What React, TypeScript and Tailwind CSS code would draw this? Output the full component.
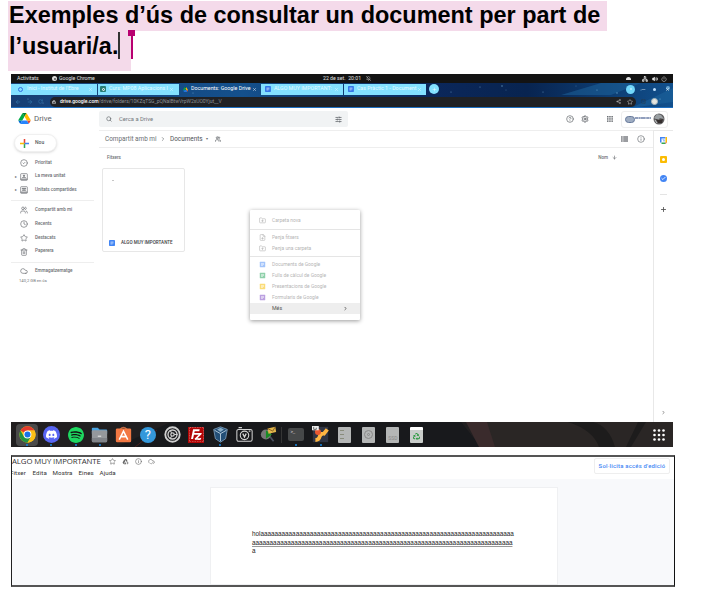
import React from "react";
import {
  Search, CircleHelp, Settings, ChevronRight, ArrowDown, ArrowLeft, ArrowRight, RotateCw, Lock,
  Share2, Star, Info, CircleCheck, Users, Clock, Trash2, Cloud, CloudCheck, FolderPlus, FilePlus, FolderUp,
  Plus, X, Network, Volume2, Power, BellOff, SlidersHorizontal, Minus, Check, PanelRight,
} from "lucide-react";
import { SiDiscord, SiSpotify, SiFilezilla } from "react-icons/si";
import { FaRecycle } from "react-icons/fa";
import { MdOutlineAddToDrive } from "react-icons/md";

const roboto = "font-['Roboto',sans-serif]";

function DriveLogo({ className }: { className: string }) {
  return (
    <svg viewBox="0 0 87 78" className={className}>
      <path d="M6.6 66.9l3.9 6.6c.8 1.4 2 2.5 3.3 3.3L27.5 53H0c0 1.6.4 3.1 1.2 4.5z" fill="#0066da" />
      <path d="M43.7 25L29.9 1.2c-1.3.8-2.5 1.9-3.3 3.3L1.2 48.5A9 9 0 000 53h27.5z" fill="#00ac47" />
      <path d="M73.6 76.8c1.3-.8 2.5-1.9 3.3-3.3L86.1 57.5c.8-1.4 1.2-2.9 1.2-4.5H59.8l5.9 11.5z" fill="#ea4335" />
      <path d="M43.7 25L57.4 1.2C56.1.4 54.5 0 52.9 0H34.4c-1.6 0-3.1.4-4.5 1.2z" fill="#00832d" />
      <path d="M59.8 53H27.5L13.8 76.8c1.3.8 2.9 1.2 4.5 1.2h50.8c1.6 0 3.1-.4 4.5-1.2z" fill="#2684fc" />
      <path d="M73.4 26.5L60.7 4.5c-.8-1.4-2-2.5-3.3-3.3L43.7 25l16.1 28h27.5c0-1.6-.4-3.1-1.2-4.5z" fill="#ffba00" />
    </svg>
  );
}

function DocIcon({ className }: { className: string }) {
  return (
    <svg viewBox="0 0 12 12" className={className} fill="none">
      <rect width="12" height="12" rx="1.5" fill="currentColor" />
      <path d="M3 4h6M3 6h6M3 8h4" stroke="white" strokeWidth="1" />
    </svg>
  );
}

function PersonBox({ wide = false }: { wide?: boolean }) {
  return (
    <svg viewBox="0 0 24 24" fill="none" stroke="currentColor" strokeWidth="2">
      <rect x="2" y="2" width="20" height="20" rx="2" /><path d="M2 18.500h20" strokeWidth="3" />
      <circle cx={wide ? 9 : 12} cy="8" r="2" fill="currentColor" /><path d="M7 14q5-4 10 0" strokeWidth="3" />
      {wide && <circle cx="15" cy="8" r="2" fill="currentColor" />}
    </svg>
  );
}

function Wallpaper() {
  return (
    <svg className="absolute inset-0 h-full w-full" viewBox="0 0 662 25" preserveAspectRatio="none">
      <defs>
        <linearGradient id="sky">
          <stop offset="0" stopColor="#173f74" />
          <stop offset=".35" stopColor="#14508c" />
          <stop offset=".63" stopColor="#0b275b" />
          <stop offset=".78" stopColor="#082450" />
          <stop offset="1" stopColor="#11508d" />
        </linearGradient>
      </defs>
      <rect width="662" height="25" fill="url(#sky)" />
      <path d="M0 24.5H662" stroke="#1e6fc0" strokeWidth="1" />
      <path d="M550 12l40-12h40l-30 12M620 25l42-20v14z" fill="#1e659d" opacity=".5" />
      <g fill="#8cc9ef" opacity=".7">
        <circle cx="469" cy="4" r=".5" /><circle cx="491" cy="3" r=".7" /><circle cx="495" cy="7" r=".4" />
        <circle cx="532" cy="9" r=".5" /><circle cx="565" cy="3" r=".4" /><circle cx="586" cy="7" r=".6" />
        <circle cx="606" cy="10" r=".7" /><circle cx="630" cy="7" r=".6" /><circle cx="657" cy="5" r="2" />
        <circle cx="17" cy="16" r=".5" /><circle cx="32" cy="20" r=".5" /><circle cx="182" cy="10" r=".5" />
        <circle cx="649" cy="16" r=".6" /><circle cx="440" cy="9" r=".5" />
      </g>
    </svg>
  );
}

function SystemBar() {
  return (
    <div className="flex h-[9px] items-center bg-[#131313] text-[5.2px] leading-none text-[#e2e2e2]">
      <span className="w-[41px] pl-[6px]">Activitats</span>
      <span className="mr-[2px] flex size-[5px] items-center justify-center rounded-full bg-[#ddd]"><i className="size-[2px] rounded-full bg-[#555]" /></span>
      <span className="w-[264px]">Google Chrome</span>
      <span className="w-[43px]">22 de set.&nbsp; 20:01</span>
      <BellOff className="size-[5px]" />
      <span className="flex-1" />
      <span className="mr-[11px] h-[3px] w-[5px] rounded-t-sm bg-[#ddd]" />
      <Network className="mr-[4px] size-[6px]" strokeWidth={3} />
      <Volume2 className="mr-[3px] size-[6px] fill-current" />
      <Power className="mr-[6px] size-[6px]" />
    </div>
  );
}

const tabClose = "mr-[4px] size-[5px] shrink-0";

function Tabs() {
  return (
    <div className="relative flex h-[12px] items-center text-[5.3px] leading-none">
      <div className="flex h-[11px] w-[86px] items-center bg-[#83e1ff] pl-[7px] text-[#e2f9ff]">
        <i className="mr-[4px] size-[5px] rounded-full border border-[#346ee2]" />
        <span className="flex-1 whitespace-nowrap">Inici - Institut de l'Ebre</span><X className={tabClose} />
      </div>
      <div className="ml-px flex h-[11px] w-[81px] items-center bg-[#83e1ff] pl-[2px] text-[#e2f9ff]">
        <i className="mr-[3px] flex size-[6px] items-center justify-center rounded-[1px] bg-[#277e76]"><i className="size-[3px] rounded-full border border-white" /></i>
        <span className="w-[60px] whitespace-nowrap">Curs: MP08 Aplicacions l</span><X className={tabClose} />
      </div>
      <div className="flex h-[11px] w-[82px] items-center pl-[4px] text-white">
        <DriveLogo className="mr-[3px] size-[5px]" />
        <span className="flex-1 whitespace-nowrap">Documents: Google Drive</span><X className={tabClose} />
      </div>
      <div className="flex h-[11px] w-[82px] items-center bg-[#83e1ff] pl-[4px] text-[#e2f9ff]">
        <DocIcon className="mr-[3px] size-[6px] text-[#3477e8]" />
        <span className="w-[61px] whitespace-nowrap">ALGO MUY IMPORTANT:</span><X className={tabClose} />
      </div>
      <div className="ml-px flex h-[11px] w-[82px] items-center bg-[#83e1ff] pl-[4px] text-[#e2f9ff]">
        <DocIcon className="mr-[3px] size-[6px] text-[#3477e8]" />
        <span className="w-[61px] whitespace-nowrap">Cas Pràctic 1 - Document</span><X className={tabClose} />
      </div>
      <span className="ml-[3px] flex size-[10px] items-center justify-center rounded-full bg-[#83e1ff]"><Plus className="size-[5px] text-white" /></span>
      <span className="flex-1" />
      <span className="mr-[6px] flex size-[9px] items-center justify-center rounded-full bg-[#72d7fa]"><i className="size-[2px] bg-[#a9eaff]" /></span>
      <Minus className="mr-[7px] size-[5px] text-white" />
      <i className="mr-[9px] size-[3px] rounded-sm bg-[#bfe1ff]" />
      <X className="mr-[3px] size-[5px] text-white" />
    </div>
  );
}

function AddressBar() {
  return (
    <div className="relative flex h-[13px] items-center text-[#3981b6]">
      <ArrowLeft className="ml-[4px] size-[6px]" />
      <ArrowRight className="ml-[6px] size-[6px]" />
      <RotateCw className="ml-[5px] size-[5px]" />
      <div className="ml-[7px] flex h-[10px] w-[586px] items-center rounded-full bg-[#202124] pl-[2px] text-[5px] leading-none text-[#8d9094]">
        <Lock className="mr-[4px] size-[4px] text-white" strokeWidth={3} />
        <span className="whitespace-nowrap tracking-[-0.02px]"><b className="font-medium text-white">drive.google.com</b>/drive/folders/10KZqTSG_pQNaIBtwVrpW2xUO0Yjut__V</span>
        <span className="flex-1" />
        <Share2 className="mr-[6px] size-[5px] text-[#ccc]" /><Star className="mr-[3px] size-[6px] text-[#ccc]" />
      </div>
      <PanelRight className="ml-[5px] size-[5px] text-[#2b4050]" />
      <span className="ml-[5px] size-[7px] rounded-full border border-[#a5b5bd] bg-[#e4e5df]" />
    </div>
  );
}

function DriveHeader() {
  return (
    <div className="flex h-[22px] items-center text-[#5f6368]">
      <div className="flex w-[88px] items-center pl-[7px]">
        <DriveLogo className="h-[11px] w-[13px]" />
        <span className="ml-[3px] text-[7.9px]">Drive</span>
      </div>
      <div className="flex h-[16px] w-[249px] items-center rounded-[2px] bg-[#f1f3f4] pl-[7px]">
        <Search className="size-[6px]" strokeWidth={2.5} />
        <span className="ml-[7px] flex-1 text-[5.8px] text-[#74787c]">Cerca a Drive</span>
        <SlidersHorizontal className="mr-[6px] size-[7px]" strokeWidth={2.6} />
      </div>
      <CircleHelp className="ml-[218px] size-[8px]" />
      <Settings className="ml-[7px] size-[8px]" strokeWidth={2.6} />
      <svg viewBox="0 0 6 6" className="ml-[18px] size-[6px]" fill="#6b6f74">
        {[0, 2.2, 4.4].map((y) => [0, 2.2, 4.4].map((x) => <rect key={`${x}-${y}`} x={x} y={y} width="1.5" height="1.5" />))}
      </svg>
      <div className="ml-[8px] flex h-[17px] w-[47px] items-center rounded-[3px] border border-[#eee] pl-[3px]">
        <span className="h-[7px] w-[10px] shrink-0 rounded-full border border-[#66799b] bg-[#9fadc2]" />
        <svg viewBox="0 0 16 4" className="-mt-[3px] h-[4px] w-[16px] shrink-0">
          <path d="M0 2h16" stroke="#6c7fa6" strokeWidth="1.3" strokeDasharray="3 .4 2 .3 5 .5" />
        </svg>
        <svg viewBox="0 0 12 12" className="ml-[2px] size-[12px] shrink-0">
          <circle cx="6" cy="6" r="5.5" fill="#605f61" />
          <path d="M1 5l3-4 4 1 3 4-4-1-2 2z" fill="#9aa0a3" /><path d="M3 6l3 1 4-1-1 4H5z" fill="#342e2d" /><path d="M2 7l2 3" stroke="#c3c7c7" />
        </svg>
      </div>
    </div>
  );
}

function NavItem({ icon, label, arrow = false }: { icon: React.ReactNode; label: string; arrow?: boolean }) {
  return (
    <div className="flex h-[13.8px] items-center text-[4.6px] font-medium leading-none text-[#6b6e72]">
      <span className="w-[9px] pl-[4px] text-[4px]">{arrow ? "▸" : ""}</span>
      <span className="w-[15px] [&>svg]:size-[8px]">{icon}</span>
      <span className="whitespace-nowrap">{label}</span>
    </div>
  );
}

function Sidebar() {
  return (
    <aside className="w-[88px] shrink-0 pt-[4px]">
      <div className="ml-[3px] flex h-[18px] w-[43px] items-center rounded-full border border-[#f0f0f0] bg-white pl-[5px] shadow-sm">
        <svg viewBox="0 0 10 10" className="size-[9px]" strokeWidth="1.7">
          <path d="M5 0v5" stroke="#ea4335" /><path d="M5 5v5" stroke="#34a853" /><path d="M0 5h5" stroke="#fbbc04" /><path d="M5 5h5" stroke="#4285f4" />
        </svg>
        <span className="ml-[6px] text-[5px] font-medium text-[#55585c]">Nou</span>
      </div>
      <div className="mt-[4px]">
        <NavItem icon={<CircleCheck />} label="Prioritat" />
        <NavItem icon={<PersonBox />} label="La meva unitat" arrow />
        <NavItem icon={<PersonBox wide />} label="Unitats compartides" arrow />
      </div>
      <div className="my-[3px] mr-[5px] border-t border-[#eee] pt-[2px]">
        <NavItem icon={<Users />} label="Compartit amb mi" />
        <NavItem icon={<Clock />} label="Recents" />
        <NavItem icon={<Star />} label="Destacats" />
        <NavItem icon={<Trash2 />} label="Paperera" />
      </div>
      <div className="mr-[5px] border-t border-[#eee] pt-[2px]">
        <NavItem icon={<Cloud />} label="Emmagatzematge" />
        <p className="pl-[8px] text-[4.2px] leading-[6px] text-[#74777a]">140,2 GB en ús</p>
      </div>
    </aside>
  );
}

function MenuRow({ icon, label, color = "text-[#aaa]" }: { icon: React.ReactNode; label: string; color?: string }) {
  return (
    <div className="flex h-[11px] items-center text-[4.9px] leading-none text-[#b5b5b5]">
      <span className={"ml-[9px] flex w-[13px] [&>svg]:size-[7px] " + color}>{icon}</span>{label}
    </div>
  );
}

function ContextMenu() {
  return (
    <div className="absolute left-[151px] top-[79px] h-[110px] w-[110px] rounded-[1px] bg-white pt-[5px] shadow-[0_1px_4px_rgba(0,0,0,0.4)]">
      <MenuRow icon={<FolderPlus strokeWidth={1.8} />} label="Carpeta nova" />
      <div className="mt-[3px] border-t border-[#e5e5e5] pt-[2px]">
        <MenuRow icon={<FilePlus strokeWidth={1.8} />} label="Penja fitxers" />
        <MenuRow icon={<FolderUp strokeWidth={1.8} />} label="Penja una carpeta" />
      </div>
      <div className="mt-[2px] border-t border-[#e5e5e5] pt-[2px]">
        <MenuRow icon={<DocIcon className="scale-[0.85]" />} label="Documents de Google" color="text-[#a3c4fa]" />
        <MenuRow icon={<DocIcon className="scale-[0.85]" />} label="Fulls de càlcul de Google" color="text-[#8fd0aa]" />
        <MenuRow icon={<DocIcon className="scale-[0.85]" />} label="Presentacions de Google" color="text-[#fbdc78]" />
        <MenuRow icon={<DocIcon className="scale-[0.85]" />} label="Formularis de Google" color="text-[#bba0e0]" />
        <div className="flex h-[11px] items-center bg-[#eee] pl-[22px] text-[5.3px] leading-none text-[#555]">
          <span className="flex-1">Més</span><ChevronRight className="mr-[12px] size-[5px]" strokeWidth={4} />
        </div>
      </div>
    </div>
  );
}

function Files() {
  return (
    <main className="relative flex-1 border-t border-[#eee]">
      <div className="flex h-[17px] items-center border-b border-[#eee] pl-[6px] text-[6.4px] leading-none text-[#6a6e72]">
        <span className="w-[51px] whitespace-nowrap">Compartit amb mi</span>
        <ChevronRight className="ml-[4px] mr-[4px] size-[6px]" strokeWidth={2.5} />
        <span className="w-[33px] text-[#505357]">Documents</span>
        <span className="ml-[3px] text-[4px]">▾</span>
        <Users className="ml-[7px] size-[6px]" strokeWidth={3} />
        <span className="flex-1" />
        <svg viewBox="0 0 7 6" className="mr-[9px] h-[6px] w-[7px]" fill="#7b7e82">
          {[0.3, 2.3, 4.3].map((y) => <path key={y} d={`M0 ${y}h1.700v1.500H0zM2.200 ${y}h4.800v1.500H2.200z`} />)}
        </svg>
        <Info className="mr-[8px] size-[8px]" />
      </div>
      <div className="flex h-[20px] items-center justify-between pl-[8px] pr-[36px] text-[4.6px] font-medium text-[#6c6f73]">
        <span>Fitxers</span><span className="flex items-center gap-[4px]">Nom <ArrowDown className="size-[5px]" strokeWidth={3} /></span>
      </div>
      <div className="ml-[3px] flex h-[84px] w-[83px] flex-col rounded-[2px] border border-[#e7e7e7]">
        <i className="ml-[9px] mt-[11px] h-px w-[2px] bg-[#c6c6c6]" />
        <div className="mt-auto flex h-[17px] items-center whitespace-nowrap pl-[6px] text-[4.55px] font-medium text-[#3c4043]">
          <DocIcon className="mr-[6px] size-[6px] text-[#4285f4]" /><span className="pt-[1px]">ALGO MUY IMPORTANTE</span>
        </div>
      </div>
      <ContextMenu />
    </main>
  );
}

function SideRail() {
  return (
    <aside className="flex w-[20px] shrink-0 flex-col items-center border-l border-t border-[#e8e8e8] text-[#555]">
      <svg viewBox="0 0 14 14" className="mt-[6px] size-[7px]">
        <path fill="#fff" d="M3 3h8v8H3z" /><path d="M0 0h11v3H3v8H0z" fill="#4285f4" /><path d="M11 0h3v11h-3z" fill="#fbbc04" /><path d="M3 11h8v3H3z" fill="#34a853" /><path d="M11 11h3l-3 3z" fill="#ea4335" /><path d="M5 5h2v4M9 5v4" fill="none" stroke="#4285f4" />
      </svg>
      <span className="mt-[12px] flex size-[7px] items-center justify-center rounded-[1px] bg-[#fbbc04]"><i className="size-[3px] rounded-full bg-white" /></span>
      <span className="mt-[12px] flex size-[7px] items-center justify-center rounded-full bg-[#4285f4]"><Check className="size-[5px] text-white" strokeWidth={4} /></span>
      <i className="mt-[12px] w-[7px] border-t border-[#e4e4e4]" />
      <Plus className="mt-[11px] size-[7px]" strokeWidth={3} />
      <ChevronRight className="mb-[7px] mt-auto size-[5px]" strokeWidth={3} />
    </aside>
  );
}

function DockItem({ children, running = false, active = false }: { children: React.ReactNode; running?: boolean; active?: boolean }) {
  return (
    <div className="relative flex h-[25px] w-[24.1px] shrink-0 items-center justify-center">
      <div className={"flex size-[22px] items-center justify-center rounded-[4px] [&>svg]:size-[17px] " + (active ? "bg-[#4a4a4a]" : "")}>{children}</div>
      {running && <i className="absolute bottom-[1px] left-[11px] size-[2px] rounded-full bg-[#1688e4]" />}
    </div>
  );
}

function Dock() {
  return (
    <div className="relative flex h-[25px] items-center bg-[#211f20] pl-[4.4px]">
      <svg viewBox="0 0 662 25" className="absolute inset-0 h-full w-full">
        <path d="M160 0h290l20 25H105z" fill="#18191c" /><path d="M455 0h24l6 25h-17z" fill="#3a2b2c" /><path d="M476 0h186v25H484z" fill="#2a2625" />
        <path d="M557 0q25 8 31 25h16Q598 4 582 0zM627 0l-12 25h5l15-25z" fill="#1d1c1c" /><path d="M124 25l22-17" stroke="#49201f" />
      </svg>
      <DockItem active running>
        <svg viewBox="0 0 48 48">
          <circle cx="24" cy="24" r="23" fill="#fbc116" />
          <path d="M24 24L4.1 12.5A23 23 0 0143.9 12.5H24z" fill="#e33b2e" /><path d="M4.1 12.5A23 23 0 0024 47l10-17-20 0z" fill="#229342" /><path d="M24 13h20A23 23 0 0124 47l10-17z" fill="#fbc116" />
          <circle cx="24" cy="24" r="11" fill="white" /><circle cx="24" cy="24" r="8.5" fill="#1a73e8" />
        </svg>
      </DockItem>
      <DockItem running><span className="flex size-[17px] items-center justify-center rounded-full bg-[#5865f2]"><SiDiscord className="size-[11px] text-white" /></span></DockItem>
      <DockItem running><span className="flex size-[16px] rounded-full bg-[#111]"><SiSpotify className="size-[16px] text-[#1ed760]" /></span></DockItem>
      <DockItem running>
        <svg viewBox="0 0 20 20"><path d="M1 3a1 1 0 011-1h6l2 2h8a1 1 0 011 1v4H1z" fill="#4aa3e0" /><rect x="1" y="5" width="18" height="14" rx="1.5" fill="#95989c" /><path d="M1 14h18v3.500a1.500 1.500 0 01-1.500 1.500h-15A1.500 1.500 0 011 17.500z" fill="#808388" /><path d="M8 12h4" stroke="#e9e9e9" strokeWidth="1.300" /></svg>
      </DockItem>
      <DockItem>
        <svg viewBox="0 0 20 20" fill="none"><path d="M6 4q4-5 8 0" stroke="#bd6b47" strokeWidth="1.5" /><rect x="1" y="3" width="18" height="16" rx="1.5" fill="#f27843" /><path d="M5 16l5-10 5 10M6 12.500h8" stroke="white" strokeWidth="1.8" /></svg>
      </DockItem>
      <DockItem><span className="flex size-[16px] items-center justify-center rounded-full bg-[#3498db] text-[13px] leading-none text-white">?</span></DockItem>
      <DockItem>
        <svg viewBox="0 0 20 20" fill="none" stroke="#cfcfcf"><circle cx="10" cy="10" r="8.5" strokeWidth="2.200" /><circle cx="10" cy="10" r="5.300" strokeWidth="1.600" /><circle cx="10" cy="10" r="2" strokeWidth="1.500" /><path d="M12 10h4M9 8L7 5M9 12l-2 3" strokeWidth="1.200" /></svg>
      </DockItem>
      <DockItem><span className="flex size-[16px] items-center justify-center bg-[#b30505]"><SiFilezilla className="size-[15px] bg-white text-[#b30505]" /></span></DockItem>
      <DockItem running>
        <svg viewBox="0 0 20 20"><path d="M10 1l8 3-2 11-6 4-6-4L2 4z" fill="#234f77" stroke="#7d9dba" /><path d="M3 5l7 4 7-4M10 9v9" fill="none" stroke="#c3d7e5" /><path d="M6 4l4-2 4 2-4 3z" fill="#8baec7" /></svg>
      </DockItem>
      <DockItem>
        <svg viewBox="0 0 20 20" fill="none" stroke="#d4d4d4"><rect x="1" y="4" width="18" height="14" rx="2" strokeWidth="1.200" /><circle cx="10" cy="11" r="5" strokeWidth="1.300" /><path d="M8 9l2 4 2-4M3 2h4M15 6h2" strokeWidth="1.500" /></svg>
      </DockItem>
      <DockItem>
        <svg viewBox="0 0 20 20"><circle cx="7" cy="10" r="6" fill="#777" /><path d="M7 5l7 5-7 5z" fill="#198a25" /><path d="M9 3l9-2 1 6-9 2z" fill="#e3b64c" /><path d="M9 3l6 3 3-5" fill="none" stroke="#80591b" /><path d="M12 13l4 5" stroke="#4b5160" strokeWidth="2" /></svg>
      </DockItem>
      <i className="relative ml-[1px] mr-[2px] h-[16px] w-px bg-[#353535]" />
      <DockItem running><span className="h-[13px] w-[16px] rounded-[2px] bg-[#464849] pl-[2px] pt-[2px] font-['Liberation_Mono',monospace] text-[4px] leading-none text-white">&gt;_</span></DockItem>
      <DockItem running>
        <svg viewBox="0 0 20 20"><path fill="#303544" d="M1 1h18v18H1z" /><path d="M4 16.500q4 0 5-4t5-3.500l4-5" fill="none" stroke="#ffb642" strokeWidth="4.500" /><circle cx="7" cy="7" r="3.500" fill="#ea5830" /><path fill="#eee" d="M0 0h8v5H0z" /><path d="M2 1v3h3V2" stroke="#555" fill="none" /></svg>
      </DockItem>
      <DockItem><span className="flex h-[16px] w-[13px] flex-col justify-around rounded-[1px] bg-[#b4b6b6] py-[2px] pl-[2px]"><i className="h-px w-[4px] bg-[#898c7c]" /><i className="h-px w-[4px] bg-[#898c7c]" /><i className="h-px w-[4px] bg-[#898c7c]" /></span></DockItem>
      <DockItem><span className="flex h-[16px] w-[13px] items-center justify-center rounded-[1px] bg-[#b4b6b6]"><i className="flex size-[9px] items-center justify-center rounded-full border border-[#898989]"><i className="size-[3px] rounded-full border border-[#898989]" /></i></span></DockItem>
      <DockItem><span className="flex h-[16px] w-[13px] items-end justify-center rounded-[1px] bg-[#b4b6b6] pb-[2px] text-[5px] leading-none text-[#888]">SSD</span></DockItem>
      <DockItem><span className="flex h-[16px] w-[13px] items-end justify-center rounded-[1px] border-t-[3px] border-white bg-[#c9cdca] pb-[3px]"><FaRecycle className="size-[7px] text-[#25973a]" /></span></DockItem>
      <svg viewBox="0 0 12 12" className="relative ml-auto mr-[8px] size-[12px]" fill="white">
        {[1.5, 6, 10.5].map((y) => [1.5, 6, 10.5].map((x) => <circle key={`${x}-${y}`} cx={x} cy={y} r="1.3" />))}
      </svg>
    </div>
  );
}

function Desktop() {
  return (
    <section className={"ml-[11px] flex h-[373px] w-[662px] flex-col overflow-hidden bg-white " + roboto}>
      <SystemBar />
      <div className="relative h-[25px]"><Wallpaper /><Tabs /><AddressBar /></div>
      <DriveHeader />
      <div className="flex min-h-0 flex-1"><Sidebar /><Files /><SideRail /></div>
      <Dock />
    </section>
  );
}

function DocumentView() {
  return (
    <section className={"ml-[11px] mt-[8px] flex h-[132px] w-[664px] flex-col overflow-hidden border-2 border-x border-b-[#555] border-l-[#222] border-r-[#111] border-t-[#555] bg-[#f8f9fb] " + roboto}>
      <header className="flex h-[22px] shrink-0 justify-between bg-white pr-[4px]">
        <div>
          <div className="flex h-[9px] items-center text-[#333]">
            <span className="w-[97px] whitespace-nowrap font-['Open_Sans',sans-serif] text-[7.8px] leading-none tracking-[-0.08px]">ALGO MUY IMPORTANTE</span>
            <span className="flex gap-[6px] text-[#666] [&>svg]:size-[7px]"><Star /><MdOutlineAddToDrive /><Info /><CloudCheck /></span>
          </div>
          <div className="-ml-[2px] mt-[2px] flex h-[11px] items-center text-[6.2px] leading-none tracking-[0.1px] text-[#333]">
            <span className="w-[22.500px]">Fitxer</span><span className="w-[20px]">Edita</span><span className="w-[26px]">Mostra</span><span className="w-[21px]">Eines</span><span>Ajuda</span>
          </div>
        </div>
        <div className="mt-[1px] flex h-[16px] w-[76px] items-center justify-center whitespace-nowrap rounded-[2px] border border-[#eee] text-[5.9px] font-medium tracking-[0.22px] text-[#4285f4]">Sol·licita accés d'edició</div>
      </header>
      <div className="ml-[198px] mt-[8px] w-[348px] flex-1 border border-[#eff0f2] bg-white">
        <div className="ml-[41px] mt-[42px] whitespace-nowrap font-['Liberation_Sans',sans-serif] text-[6.34px] leading-[8.7px] text-[#222]">
          <p>hola{"a".repeat(71)}</p>
          <p className="underline decoration-[#999]">{"a".repeat(74)}</p>
          <p>a</p>
        </div>
      </div>
    </section>
  );
}

export default function App() {
  return (
    <div className="h-[600px] w-[703px] overflow-hidden bg-white">
      <h1 className="ml-[8px] h-[74px] pt-[1px] font-['Liberation_Sans',sans-serif] text-[23.44px] font-bold leading-[31px] text-black">
        <span className="block h-[30px] w-[599px] whitespace-nowrap bg-[#f4daea] pl-px leading-[28px]">Exemples d’ús de consultar un document per part de</span>
        <span className="flex h-[40px] w-[123px] items-start bg-[#f4daea] pl-px leading-[30px]">
          l’usuari/a.
          <i className="mt-[1px] h-[27px] w-[2px] bg-[#333]" />
          <i className="-mr-[4px] -mt-[1px] ml-auto flex h-[29px] w-[7px] shrink-0 flex-col items-center">
            <i className="h-[6px] w-[7px] bg-[#b80070]" /><i className="w-[2px] flex-1 bg-[#b80070]" />
          </i>
        </span>
      </h1>
      <Desktop />
      <DocumentView />
    </div>
  );
}
